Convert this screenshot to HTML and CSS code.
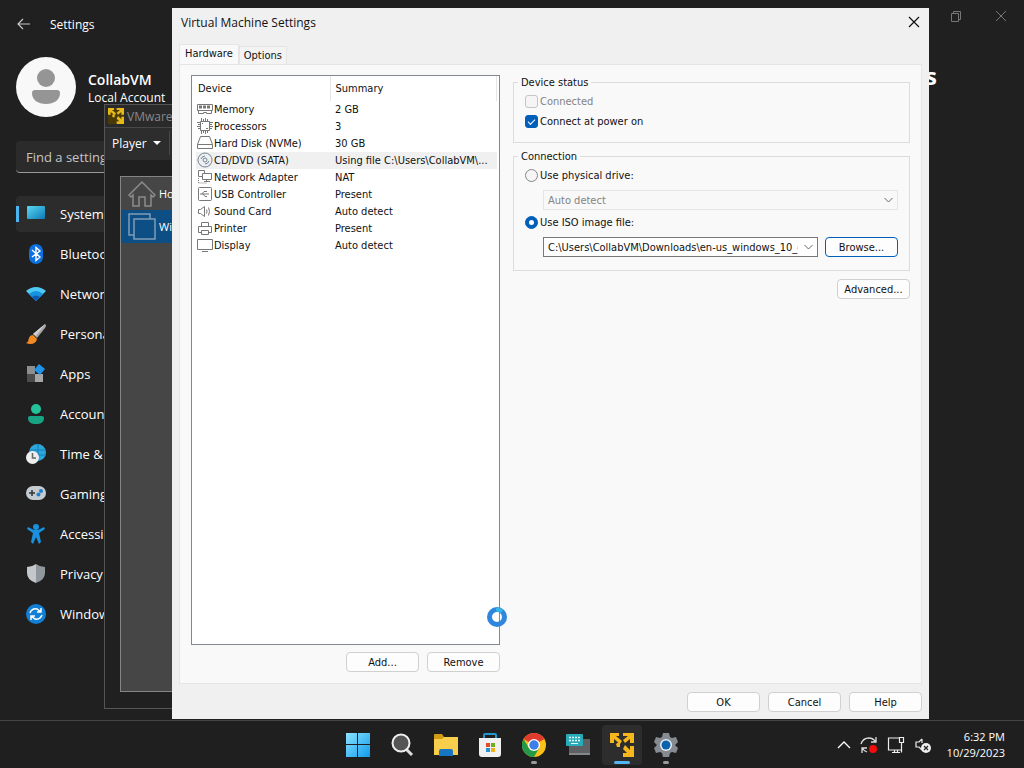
FILE: index.html
```html
<!DOCTYPE html>
<html lang="en">
<head>
  <meta charset="utf-8">
  <meta name="viewport" content="width=device-width, initial-scale=1.0">
  <title>Virtual Machine Settings</title>
  <link rel="stylesheet" href="styles.css">
</head>
<body>
  <svg class="defs" width="0" height="0" aria-hidden="true">
    <symbol id="vmware" viewBox="0 0 24 24">
      <path d="M0 0h9v3H6l6 5-2 3-6-5v4H0z"/>
      <path d="M13 0h11v10h-4V6l-5 4-2-3 5-4h-5z"/>
      <path d="M24 13v11H13v-4h4l-4-4 2-4 5 5v-4z"/>
      <path d="M6 11l4-3v6H7z"/>
    </symbol>
  </svg>

  <main class="desktop">
    <!-- Windows Settings -->
    <section class="settings">
      <header class="settings-head">
        <button class="back" aria-label="Back">
          <svg width="14" height="12" viewBox="0 0 14 12"><path d="M13 6H1M6 1L1 6l5 5" fill="none" stroke="#c8c8c8" stroke-width="1.2"/></svg>
        </button>
        <span class="settings-title">Settings</span>
        <button class="caption" aria-label="Restore">
          <svg width="11" height="11" viewBox="0 0 11 11"><path d="M1.500 2.500h7v8h-7zM3.500 2.500v-2h7v8h-2" fill="none" stroke="#777"/></svg>
        </button>
        <button class="caption" aria-label="Close">
          <svg width="12" height="12" viewBox="0 0 12 12"><path d="M1 1l10 10M11 1L1 11" stroke="#777"/></svg>
        </button>
      </header>
      <div class="settings-body">
        <aside class="sidebar">
          <div class="account">
            <svg width="60" height="60" viewBox="0 0 60 60"><circle cx="30" cy="30" r="30" fill="#f8f8f8"/><circle cx="30" cy="21" r="9" fill="#959595"/><path d="M19 33h22q3 0 3 3c0 7-6 11-14 11s-14-4-14-11q0-3 3-3z" fill="#959595"/></svg>
            <div>
              <div class="account-name">CollabVM</div>
              <div class="account-type">Local Account</div>
            </div>
          </div>
          <input class="search" type="text" placeholder="Find a setting" aria-label="Find a setting">
          <nav class="nav">
            <a href="#" class="active">
              <svg width="20" height="20" viewBox="0 0 20 20"><defs><linearGradient id="sys" x2="1" y2="1"><stop stop-color="#5ad8f2"/><stop offset="1" stop-color="#0c79b5"/></linearGradient></defs><rect x="1" y="2" width="18" height="13" rx="1" fill="url(#sys)"/></svg>
              System</a>
            <a href="#">
              <svg width="20" height="20" viewBox="0 0 20 20"><rect x="3" width="14" height="20" rx="7" fill="#0e6fe0"/><path d="M6 6l8 7-4 3.500V3.500L14 7l-8 6" fill="none" stroke="#fff" stroke-width="1.400"/></svg>
              Bluetooth</a>
            <a href="#">
              <svg width="20" height="20" viewBox="0 0 20 20"><path d="M0 7Q10-1 20 7L10 17z" fill="#50c8f4"/><path d="M3 10q7-6 14 0l-7 7z" fill="#1593e0"/><path d="M6 13q4-3 8 0l-4 4z" fill="#0c59b0"/></svg>
              Network</a>
            <a href="#">
              <svg width="20" height="20" viewBox="0 0 20 20"><path d="M19 0q2 1 0 4l-8 10-4-4z" fill="#a6a6a6"/><path d="M19 0l-9 12-3-2z" fill="#d0d0d0"/><path d="M7 11l4 4c-1 5-6 6-11 4 3-1 2-3 3-5q1-3 4-3z" fill="#f28a21"/></svg>
              Personalization</a>
            <a href="#">
              <svg width="20" height="20" viewBox="0 0 20 20"><path d="M1 2h8v8H1z" fill="#8e8e8e"/><path d="M1 10h8v8H1z" fill="#4c4c4c"/><path d="M9 10h8v8H9z" fill="#a6a6a6"/><path d="M13 0l6 5-5 6-6-5z" fill="#2094e8"/></svg>
              Apps</a>
            <a href="#">
              <svg width="20" height="20" viewBox="0 0 20 20"><circle cx="10" cy="5" r="5" fill="#24c29b"/><path d="M4 12h12q2 0 2 2c0 4-3 6-8 6s-8-2-8-6q0-2 2-2z" fill="#18a384"/></svg>
              Accounts</a>
            <a href="#">
              <svg width="20" height="20" viewBox="0 0 20 20"><circle cx="11.500" cy="8.500" r="8.500" fill="#2ba7dc"/><path d="M12 0v17M4 6h16M5 11h15" stroke="#167eb5"/><circle cx="6.500" cy="13.500" r="6.500" fill="#eee"/><path d="M6.500 9v5H10" fill="none" stroke="#666" stroke-width="1.500"/></svg>
              Time &amp; language</a>
            <a href="#">
              <svg width="20" height="20" viewBox="0 0 20 20"><rect y="2" width="20" height="14" rx="7" fill="#c4cbd1"/><path d="M3 9h6M6 6v6" stroke="#333" stroke-width="1.500"/><circle cx="15" cy="7" r="2" fill="#2180c6"/><circle cx="12.500" cy="10.500" r="2" fill="#2180c6"/></svg>
              Gaming</a>
            <a href="#">
              <svg width="20" height="20" viewBox="0 0 20 20"><circle cx="10" cy="3" r="3" fill="#1991df"/><path d="M2 3l6 3h4l6-3 1 2-6 4 2 9-2 2-3-7-3 7-2-2 2-9-6-4z" fill="#1991df"/></svg>
              Accessibility</a>
            <a href="#">
              <svg width="20" height="20" viewBox="0 0 20 20"><path d="M10 0q4 3 9 3v6q0 7-9 10z" fill="#8f979d"/><path d="M10 0Q6 3 1 3v6q0 7 9 10z" fill="#c2c8cc"/></svg>
              Privacy &amp; security</a>
            <a href="#">
              <svg width="20" height="20" viewBox="0 0 20 20"><circle cx="10" cy="10" r="10" fill="#127fd6"/><path d="M4 9q2-5 7-4l4 3M16 11q-2 5-7 4l-4-3M15 4v4h-4M5 16v-4h4" fill="none" stroke="#fff" stroke-width="1.500"/></svg>
              Windows Update</a>
          </nav>
        </aside>
        <h1 class="settings-heading">Settings</h1>
      </div>
    </section>

    <!-- VMware Player -->
    <section class="player">
      <header class="player-title">
        <svg width="16" height="16" fill="#e8b71a"><rect width="16" height="16" fill="#4a3a08"/><use href="#vmware"/></svg>
        VMware
      </header>
      <div class="player-menu">
        <button>Player <svg width="8" height="4" viewBox="0 0 8 4"><path d="M0 0h8L4 4z" fill="#fff"/></svg></button>
      </div>
      <div class="library">
        <a href="#">
          <svg width="28" height="28" viewBox="0 0 28 28"><path d="M1 15L14 2l13 13-2 2-2-2v11h-6v-9h-6v9H5V15l-2 2z" fill="none" stroke="#8c8c8c" stroke-width="1.500"/></svg>
          Home</a>
        <a href="#" class="selected">
          <svg width="28" height="28" viewBox="0 0 28 28"><path d="M6 22H1V1h21v5M6 6h21v20H6z" fill="none" stroke="#7f9db5" stroke-width="1.500"/></svg>
          Win</a>
      </div>
    </section>

    <!-- Virtual Machine Settings dialog -->
    <section class="dialog" role="dialog" aria-label="Virtual Machine Settings">
      <header class="dialog-title">
        <h2>Virtual Machine Settings</h2>
        <button aria-label="Close dialog">
          <svg width="12" height="12" viewBox="0 0 12 12"><path d="M1 1l10 10M11 1L1 11" stroke="#111" stroke-width="1.200"/></svg>
        </button>
      </header>
      <div class="tabs">
        <button class="tab current">Hardware</button>
        <button class="tab">Options</button>
      </div>
      <div class="panel">
        <div class="devices">
          <div class="device-list">
            <table>
              <thead>
                <tr><th>Device</th><th>Summary</th></tr>
              </thead>
              <tbody>
                <tr>
                  <td><svg viewBox="0 0 16 16"><path d="M.500 3.500h15v6H.500zM1.500 9.500v3h5v-1h3v1h5v-3"/><path d="M2 6h12" stroke-width="3" stroke-dasharray="3 1"/></svg>Memory</td>
                  <td>2 GB</td>
                </tr>
                <tr>
                  <td><svg viewBox="0 0 16 16"><path d="M3.500 3.500h9v9h-9z"/><path d="M4.500 0v3M6.500 1v2M8.500 0v3M10.500 1v2M4.500 13v3M6.500 13v2M8.500 13v3M10.500 13v2M0 4.500h3M1 6.500h2M0 8.500h3M1 10.500h2M13 4.500h3M13 6.500h2M13 8.500h3M13 10.500h2M5 5.500h1M9 10.500h2"/></svg>Processors</td>
                  <td>3</td>
                </tr>
                <tr>
                  <td><svg viewBox="0 0 16 16"><path d="M3.500 1.500h9l3 8v4H.500v-4zM.500 9.500h15"/></svg>Hard Disk (NVMe)</td>
                  <td>30 GB</td>
                </tr>
                <tr class="selected">
                  <td><svg viewBox="0 0 16 16"><g stroke="#718495"><circle cx="8" cy="8" r="7"/><circle cx="8" cy="8" r="2"/><path d="M4 7q1-3 4-3M12 9q-1 3-4 3"/></g></svg>CD/DVD (SATA)</td>
                  <td>Using file C:\Users\CollabVM\...</td>
                </tr>
                <tr>
                  <td><svg viewBox="0 0 16 16"><path d="M7.500 4V1.500h-6v6h4M5.500 4.500h9v6h-9zM9.500 10.500v2M7 12.500h6"/><path d="M1.500 9v5h8" stroke-dasharray="1 1"/></svg>Network Adapter</td>
                  <td>NAT</td>
                </tr>
                <tr>
                  <td><svg viewBox="0 0 16 16"><rect x="1.500" y="1.500" width="13" height="13" rx="1"/><path d="M3 8h9M5 8l2-2.500h3M6 8l2 2.500h2"/></svg>USB Controller</td>
                  <td>Present</td>
                </tr>
                <tr>
                  <td><svg viewBox="0 0 16 16"><path d="M1.500 6.500v4h2l4 3v-10l-4 3zM9.500 6.500q1 2 0 4M11.500 4.500q2 4 0 8"/></svg>Sound Card</td>
                  <td>Auto detect</td>
                </tr>
                <tr>
                  <td><svg viewBox="0 0 16 16"><path d="M4.500 6.500v-4h7v4M4 12.500H1.500v-6h13v6H12M4.500 10.500h7v4h-7z"/></svg>Printer</td>
                  <td>Present</td>
                </tr>
                <tr>
                  <td><svg viewBox="0 0 16 16"><path d="M.500 2.500h15v10H.500zM5 14.500h6"/></svg>Display</td>
                  <td>Auto detect</td>
                </tr>
              </tbody>
            </table>
          </div>
          <div class="buttons">
            <button class="btn">Add...</button>
            <button class="btn">Remove</button>
          </div>
        </div>

        <div class="options">
          <fieldset>
            <legend>Device status</legend>
            <label class="choice disabled"><input type="checkbox" disabled> Connected</label>
            <label class="choice"><input type="checkbox" checked> Connect at power on</label>
          </fieldset>
          <fieldset>
            <legend>Connection</legend>
            <label class="choice"><input type="radio" name="source"> Use physical drive:</label>
            <div class="source">
              <select aria-label="Physical drive" disabled>
                <option>Auto detect</option>
              </select>
            </div>
            <label class="choice"><input type="radio" name="source" checked> Use ISO image file:</label>
            <div class="source">
              <select aria-label="ISO image file">
                <option>C:\Users\CollabVM\Downloads\en-us_windows_10_enterprise.iso</option>
              </select>
              <button class="btn default">Browse...</button>
            </div>
          </fieldset>
          <div class="buttons">
            <button class="btn">Advanced...</button>
          </div>
        </div>
      </div>
      <footer class="buttons dialog-buttons">
        <button class="btn">OK</button>
        <button class="btn">Cancel</button>
        <button class="btn">Help</button>
      </footer>
    </section>

    <svg class="busy" width="20" height="20" viewBox="0 0 20 20"><circle cx="10" cy="10" r="7.500" fill="none" stroke="#2f86dc" stroke-width="5"/><path d="M9 2.500a7.500 7.500 0 0 1 6 2" fill="none" stroke="#35b4e8" stroke-width="4"/></svg>
  </main>

  <footer class="taskbar">
    <div class="apps">
      <button aria-label="Start">
        <svg width="24" height="24" viewBox="0 0 24 24"><defs><linearGradient id="win" x2="1" y2="1"><stop stop-color="#8be4ff"/><stop offset="1" stop-color="#109bec"/></linearGradient></defs><path d="M0 0h11v11H0zM12 0h12v11H12zM0 12h11v12H0zM12 12h12v12H12z" fill="url(#win)"/></svg>
      </button>
      <button aria-label="Search">
        <svg width="24" height="24" viewBox="0 0 24 24"><path d="M16 16l6 6" stroke="#ddd" stroke-width="3"/><circle cx="11" cy="10" r="8.500" fill="#555" stroke="#eee" stroke-width="2"/></svg>
      </button>
      <button aria-label="File Explorer">
        <svg width="26" height="24" viewBox="0 0 26 24"><path d="M1 2q0-1 1-1h7l2 3h13q1 0 1 1v8H1z" fill="#d39a14"/><path d="M1 6h8l2-2h14v18H1z" fill="#f8ce4c"/><path d="M6 23v-5q0-2 2-2h10q2 0 2 2v5z" fill="#1875c4"/></svg>
      </button>
      <button aria-label="Microsoft Store">
        <svg width="24" height="24" viewBox="0 0 24 24"><path d="M6 6V2q0-1 1-1h10q1 0 1 1v4" fill="none" stroke="#2196cf" stroke-width="2"/><path d="M1 5h22v16q0 3-3 3H4q-3 0-3-3z" fill="#f0f0f0"/><path d="M8 10h4v4H8z" fill="#e34c26"/><path d="M13 10h4v4h-4z" fill="#6fae1c"/><path d="M8 15h4v4H8z" fill="#2492d1"/><path d="M13 15h4v4h-4z" fill="#f3ae1c"/></svg>
      </button>
      <button class="running" aria-label="Chrome">
        <svg width="24" height="24" viewBox="0 0 24 24"><circle cx="12" cy="12" r="12" fill="#fbc116"/><path d="M12 12L1.600 6A12 12 0 0 1 22.400 6z" fill="#e23b2e"/><path d="M1.600 6A12 12 0 0 0 12 24l5.200-9H6.800z" fill="#249a48"/><circle cx="12" cy="12" r="6" fill="#fff"/><circle cx="12" cy="12" r="4.700" fill="#3c7fe8"/></svg>
      </button>
      <button aria-label="On-screen Keyboard">
        <svg width="26" height="24" viewBox="0 0 26 24"><path d="M4 6h21v16H4z" fill="#5e6063"/><path d="M4 20h21v2H4z" fill="#85888b"/><rect x="1" y="1" width="17" height="12" rx="1" fill="#29abb9"/><path d="M4 4.500h12M4 7.500h12" stroke="#e4ffff" stroke-width="1.500" stroke-dasharray="2 1"/><path d="M6 10.500h7" stroke="#e4ffff"/></svg>
      </button>
      <button class="running focused" aria-label="VMware Player">
        <svg width="24" height="24" fill="#f5b71b"><use href="#vmware"/></svg>
      </button>
      <button class="running" aria-label="Settings app">
        <svg width="24" height="24" viewBox="0 0 24 24"><path d="M9 0h6l1 4 2 1 4-1 2 5-3 3 3 3-2 5-4-1-2 1-1 4H9l-1-4-2-1-4 1-2-5 3-3-3-3 2-5 4 1 2-1z" fill="#858b90"/><circle cx="12" cy="12" r="6" fill="#e7eef3"/><circle cx="12" cy="12" r="4.500" fill="#0c62ad"/></svg>
      </button>
    </div>
    <div class="tray">
      <svg width="14" height="18" viewBox="0 0 14 18"><path d="M1 12l6-6 6 6" fill="none" stroke="#fff" stroke-width="1.300"/></svg>
      <svg width="18" height="18" viewBox="0 0 18 18"><path d="M1 8q2-6 8-6 4 0 7 4M16 1v5h-5M2 17v-5h5M2 12q2 3 5 4" fill="none" stroke="#ddd" stroke-width="1.300"/><circle cx="13" cy="13" r="4" fill="#f40b0b"/></svg>
      <svg width="18" height="18" viewBox="0 0 18 18"><path d="M12 2H1.500v12H14M5 16.500h8M7.500 14v2M10.500 14v2M12.500 1.500h4v5h-4zM14.500 6.500v10" fill="none" stroke="#eee" stroke-width="1.200"/></svg>
      <svg width="18" height="18" viewBox="0 0 18 18"><path d="M8 3L5 6H2v5h3l3 3M8 3v4" fill="none" stroke="#eee" stroke-width="1.200"/><circle cx="12" cy="12" r="5" fill="#eee"/><path d="M10 10l4 4M14 10l-4 4" stroke="#222" stroke-width="1.200"/></svg>
      <div class="clock">6:32 PM<br>10/29/2023</div>
    </div>
  </footer>
</body>
</html>
```

FILE: styles.css
```css
* {
  box-sizing: border-box;
}
body {
  margin: 0;
  min-height: 100vh;
  display: flex;
  flex-direction: column;
  background: #202020;
  color: #fff;
  font-family: "Open Sans", "Noto Sans", sans-serif;
  font-size: 12px;
  overflow: hidden;
}
button, input, select {
  font: inherit;
  color: inherit;
}
button {
  border: none;
  padding: 0;
  background: none;
}
svg {
  display: block;
  flex: none;
}
a {
  color: inherit;
  text-decoration: none;
}
.defs {
  position: absolute;
}
.desktop {
  flex: 1;
  position: relative;
  display: flex;
}

/* settings window */
.settings {
  flex: 1;
}
.settings-head {
  display: flex;
  align-items: center;
  height: 48px;
  padding-left: 17px;
}
.settings-title {
  flex: 1;
  margin-left: 19px;
}
.caption {
  align-self: flex-start;
  display: grid;
  place-items: center;
  width: 46px;
  height: 32px;
}
.settings-body {
  display: flex;
  justify-content: space-between;
}
.sidebar {
  width: 298px;
  padding: 9px 0 0 16px;
}
.account {
  display: flex;
  align-items: center;
  gap: 12px;
}
.account-name {
  padding-top: 2px;
  font-size: 14px;
  font-weight: 600;
  line-height: 20px;
}
.account-type {
  line-height: 16px;
}
.search {
  width: 100%;
  height: 32px;
  margin: 24px 0 23px;
  padding: 0 10px;
  background: #2b2b2b;
  border: none;
  border-bottom: 1px solid #9a9a9a;
  border-radius: 4px;
  font-size: 13px;
}
.search::placeholder {
  color: #c5c5c5;
  opacity: 1;
}
.nav {
  display: flex;
  flex-direction: column;
  gap: 4px;
}
.nav a {
  display: flex;
  align-items: center;
  gap: 14px;
  height: 36px;
  padding-left: 7px;
  border-left: 3px solid transparent;
  border-radius: 4px;
  font-size: 13px;
}
.nav .active {
  background: linear-gradient(#4cb4f0, #4cb4f0) left / 3px 16px no-repeat border-box, #2c2c2c border-box;
}
.settings-heading {
  margin: 12px 87px 0 0;
  font-size: 24px;
  line-height: 32px;
}

/* player window */
.player {
  position: absolute;
  left: 104px;
  top: 104px;
  right: 120px;
  bottom: 11px;
  display: flex;
  flex-direction: column;
  background: #202020;
  border: 1px solid #555;
}
.player-title {
  display: flex;
  align-items: center;
  gap: 3px;
  height: 22px;
  padding-left: 3px;
  background: #2a2a2a;
  color: #888;
}
.player-menu {
  display: flex;
  height: 33px;
  background: #2d2d2d;
  border-top: 1px solid #484848;
}
.player-menu button {
  display: flex;
  align-items: center;
  gap: 6px;
  margin: 3px 0 5px;
  padding: 0 8px 0 7px;
  border-right: 1px solid #484848;
}
.library {
  flex: 1;
  margin: 16px 15px;
  background: #464646;
  border: 1px solid #858585;
  font-size: 11px;
}
.library a {
  display: flex;
  align-items: center;
  gap: 3px;
  height: 33px;
  padding-left: 7px;
}
.library .selected {
  background: #0d4f85;
}

/* dialog */
.dialog {
  position: absolute;
  left: 172px;
  right: 95px;
  top: 8px;
  bottom: 1px;
  display: flex;
  flex-direction: column;
  padding: 0 7px;
  background: #f0f0f0;
  color: #111;
  font-family: "DejaVu Sans Condensed", Roboto, sans-serif;
  font-size: 11px;
}
.dialog-title {
  display: flex;
  justify-content: space-between;
  align-items: center;
  height: 28px;
  padding-left: 2px;
}
.dialog-title h2 {
  margin: 0;
  font-family: "Open Sans", "Noto Sans", sans-serif;
  font-size: 12px;
  font-weight: normal;
}
.dialog-title button {
  padding: 2px;
}
.tabs {
  display: flex;
  align-items: flex-end;
  padding-top: 8px;
}
.tab {
  height: 18px;
  padding: 0 4px;
  background: #f3f3f3;
  border: 1px solid #e5e5e5;
  border-bottom: none;
}
.tab.current {
  height: 20px;
  padding: 0 5px 2px;
  background: #f9f9f9;
}
.panel {
  flex: 1;
  display: grid;
  grid-template-columns: 309px 1fr;
  gap: 13px;
  padding: 10px 11px 11px 11px;
  background: #f9f9f9;
  border: 1px solid #e5e5e5;
}
.devices {
  display: flex;
  flex-direction: column;
  gap: 7px;
}
.device-list {
  flex: 1;
  padding: 0 2px 0 4px;
  background: #fff;
  border: 1px solid #828790;
}
.device-list table {
  width: 100%;
  table-layout: fixed;
  border-collapse: collapse;
}
.device-list th {
  width: 134px;
  height: 25px;
  padding: 0 2px;
  border-right: 1px solid #e5e5e5;
  font-weight: normal;
  text-align: left;
}
.device-list th + th {
  width: auto;
  padding-left: 5px;
}
.device-list td {
  height: 17px;
  padding: 0 2px 0 5px;
  line-height: 17px;
  white-space: nowrap;
}
.device-list td:first-child {
  padding: 0 0 0 1px;
}
.device-list td svg {
  float: left;
  width: 16px;
  height: 16px;
  margin-right: 1px;
  fill: none;
  stroke: #777;
}
.device-list .selected td {
  background: #f0f0f0;
}
.buttons {
  display: flex;
  justify-content: flex-end;
  gap: 8px;
}
.btn {
  width: 73px;
  height: 20px;
  background: #fdfdfd;
  border: 1px solid #d0d0d0;
  border-radius: 4px;
}
.btn.default {
  border-color: #005fb8;
}
.dialog-buttons {
  padding: 8px 0 7px;
}
.options {
  min-width: 0;
}
.options fieldset {
  min-width: 0;
  margin: 0 0 6px;
  padding: 1px 11px 11px;
  border: 1px solid #dcdcdc;
}
.options fieldset + fieldset {
  margin-bottom: 8px;
}
.options legend {
  margin-left: -7px;
  padding: 0 3px;
  line-height: 15px;
}
.choice {
  display: flex;
  align-items: center;
  gap: 2px;
  height: 20px;
}
.choice.disabled {
  color: #838383;
}
.choice input {
  appearance: none;
  display: grid;
  place-items: center;
  width: 13px;
  height: 13px;
  margin: 0;
  background: #f5f5f5;
  border: 1px solid #868686;
  border-radius: 3px;
}
.choice input:disabled {
  border-color: #c5c5c5;
}
.choice input:checked {
  background: #005fb8;
  border-color: #005fb8;
}
.choice input[type="checkbox"]:checked::before {
  content: "";
  width: 6px;
  height: 3px;
  border: solid #fff;
  border-width: 0 0 1px 1px;
  transform: rotate(-45deg);
}
.choice input[type="radio"] {
  border-radius: 50%;
}
.choice input[type="radio"]:checked::before {
  content: "";
  width: 5px;
  height: 5px;
  background: #fff;
  border-radius: 50%;
}
.source {
  display: flex;
  gap: 7px;
  margin: 5px 0 2px;
  padding-left: 18px;
}
.source select {
  appearance: none;
  flex: 1;
  min-width: 0;
  height: 20px;
  padding: 0 19px 0 4px;
  background: #fff url("data:image/svg+xml,%3Csvg xmlns='http://www.w3.org/2000/svg' width='9' height='6'%3E%3Cpath d='M.5 1l4 4 4-4' fill='none' stroke='%23666'/%3E%3C/svg%3E") right 4px center no-repeat;
  border: 1px solid #777;
  border-radius: 0;
}
.source select:disabled {
  background-color: #f8f8f8;
  border-color: #e5e5e5;
  color: #838383;
  opacity: 1;
}

.busy {
  position: absolute;
  left: 487px;
  top: 607px;
}

/* taskbar */
.taskbar {
  display: grid;
  grid-template-columns: 1fr auto 1fr;
  align-items: center;
  height: 48px;
  background: #1f1f1f;
  border-top: 1px solid #444;
}
.apps {
  grid-column: 2;
  display: flex;
  gap: 4px;
}
.apps button {
  display: grid;
  place-items: center;
  position: relative;
  width: 40px;
  height: 40px;
  border-radius: 4px;
}
.apps .focused {
  background: #2d2d2d;
}
.apps .running::after {
  content: "";
  position: absolute;
  left: 17px;
  bottom: 1px;
  width: 6px;
  height: 3px;
  border-radius: 2px;
  background: #9a9a9a;
}
.apps .focused::after {
  left: 12px;
  width: 16px;
  background: #56b4f0;
}
.tray {
  display: flex;
  justify-content: flex-end;
  align-items: center;
  gap: 9px;
  padding-right: 19px;
}
.clock {
  margin-left: 6px;
  font-size: 11px;
  line-height: 16px;
  text-align: right;
}
```
